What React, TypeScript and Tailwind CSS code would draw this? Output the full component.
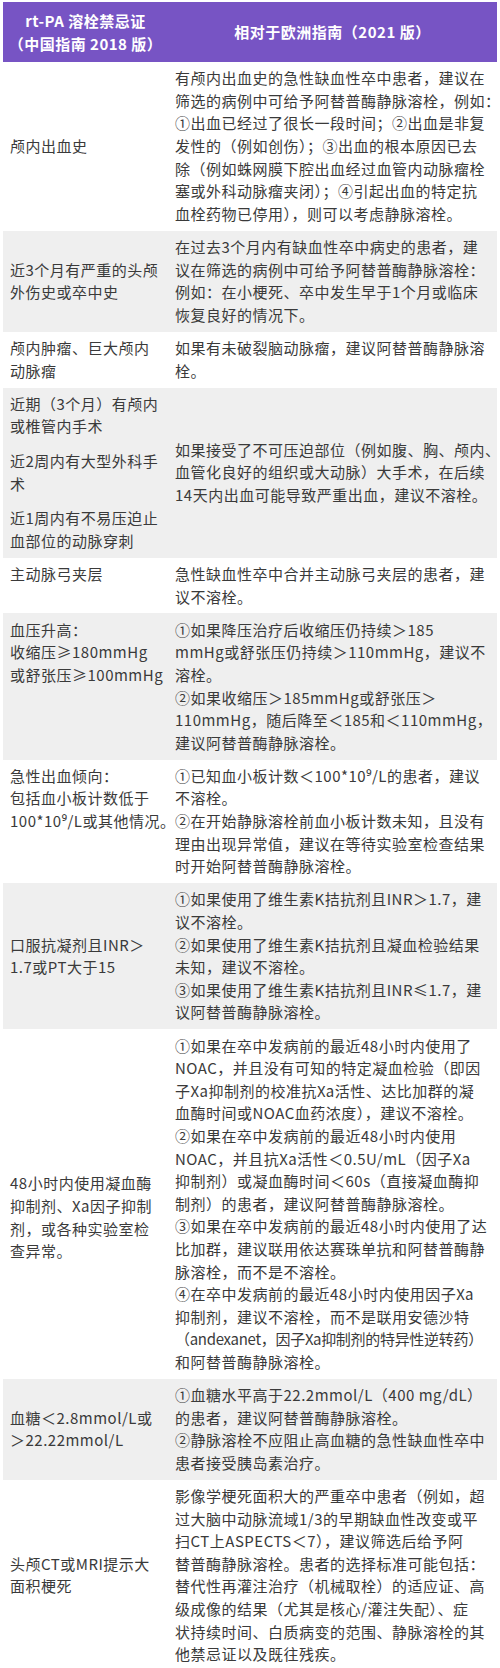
type Row = {
  gray: boolean;
  left: string[][];
  right: string[];
  align?: string;
};

const rows: Row[] = [
  {
    gray: false,
    left: [["颅内出血史"]],
    right: [
      "有颅内出血史的急性缺血性卒中患者，建议在",
      "筛选的病例中可给予阿替普酶静脉溶栓，例如：",
      "①出血已经过了很长一段时间；②出血是非复",
      "发性的（例如创伤）；③出血的根本原因已去",
      "除（例如蛛网膜下腔出血经过血管内动脉瘤栓",
      "塞或外科动脉瘤夹闭）；④引起出血的特定抗",
      "血栓药物已停用），则可以考虑静脉溶栓。",
    ],
  },
  {
    gray: true,
    left: [["近3个月有严重的头颅", "外伤史或卒中史"]],
    right: [
      "在过去3个月内有缺血性卒中病史的患者，建",
      "议在筛选的病例中可给予阿替普酶静脉溶栓：",
      "例如：在小梗死、卒中发生早于1个月或临床",
      "恢复良好的情况下。",
    ],
  },
  {
    gray: false,
    left: [["颅内肿瘤、巨大颅内", "动脉瘤"]],
    right: ["如果有未破裂脑动脉瘤，建议阿替普酶静脉溶", "栓。"],
  },
  {
    gray: true,
    left: [
      ["近期（3个月）有颅内", "或椎管内手术"],
      ["近2周内有大型外科手", "术"],
      ["近1周内有不易压迫止", "血部位的动脉穿刺"],
    ],
    right: [
      "如果接受了不可压迫部位（例如腹、胸、颅内、",
      "血管化良好的组织或大动脉）大手术，在后续",
      "14天内出血可能导致严重出血，建议不溶栓。",
    ],
  },
  {
    gray: false,
    left: [["主动脉弓夹层"]],
    right: ["急性缺血性卒中合并主动脉弓夹层的患者，建", "议不溶栓。"],
    align: "self-start",
  },
  {
    gray: true,
    left: [["血压升高：", "收缩压≥180mmHg", "或舒张压≥100mmHg"]],
    right: [
      "①如果降压治疗后收缩压仍持续＞185",
      "mmHg或舒张压仍持续＞110mmHg，建议不",
      "溶栓。",
      "②如果收缩压＞185mmHg或舒张压＞",
      "110mmHg，随后降至＜185和＜110mmHg，",
      "建议阿替普酶静脉溶栓。",
    ],
    align: "self-start",
  },
  {
    gray: false,
    left: [["急性出血倾向：", "包括血小板计数低于", "100*10⁹/L或其他情况。"]],
    right: [
      "①已知血小板计数＜100*10⁹/L的患者，建议",
      "不溶栓。",
      "②在开始静脉溶栓前血小板计数未知，且没有",
      "理由出现异常值，建议在等待实验室检查结果",
      "时开始阿替普酶静脉溶栓。",
    ],
    align: "self-start",
  },
  {
    gray: true,
    left: [["口服抗凝剂且INR＞", "1.7或PT大于15"]],
    right: [
      "①如果使用了维生素K拮抗剂且INR＞1.7，建",
      "议不溶栓。",
      "②如果使用了维生素K拮抗剂且凝血检验结果",
      "未知，建议不溶栓。",
      "③如果使用了维生素K拮抗剂且INR≤1.7，建",
      "议阿替普酶静脉溶栓。",
    ],
  },
  {
    gray: false,
    left: [["48小时内使用凝血酶", "抑制剂、Xa因子抑制", "剂，或各种实验室检", "查异常。"]],
    right: [
      "①如果在卒中发病前的最近48小时内使用了",
      "NOAC，并且没有可知的特定凝血检验（即因",
      "子Xa抑制剂的校准抗Xa活性、达比加群的凝",
      "血酶时间或NOAC血药浓度），建议不溶栓。",
      "②如果在卒中发病前的最近48小时内使用",
      "NOAC，并且抗Xa活性＜0.5U/mL（因子Xa",
      "抑制剂）或凝血酶时间＜60s（直接凝血酶抑",
      "制剂）的患者，建议阿替普酶静脉溶栓。",
      "③如果在卒中发病前的最近48小时内使用了达",
      "比加群，建议联用依达赛珠单抗和阿替普酶静",
      "脉溶栓，而不是不溶栓。",
      "④在卒中发病前的最近48小时内使用因子Xa",
      "抑制剂，建议不溶栓，而不是联用安德沙特",
      "~（andexanet，因子Xa抑制剂的特异性逆转药）",
      "和阿替普酶静脉溶栓。",
    ],
    align: "self-start pt-[143px]",
  },
  {
    gray: true,
    left: [["血糖＜2.8mmol/L或", "＞22.22mmol/L"]],
    right: [
      "①血糖水平高于22.2mmol/L（400 mg/dL）",
      "的患者，建议阿替普酶静脉溶栓。",
      "②静脉溶栓不应阻止高血糖的急性缺血性卒中",
      "患者接受胰岛素治疗。",
    ],
  },
  {
    gray: false,
    left: [["头颅CT或MRI提示大", "面积梗死"]],
    right: [
      "影像学梗死面积大的严重卒中患者（例如，超",
      "过大脑中动脉流域1/3的早期缺血性改变或平",
      "扫CT上ASPECTS＜7），建议筛选后给予阿",
      "替普酶静脉溶栓。患者的选择标准可能包括：",
      "替代性再灌注治疗（机械取栓）的适应证、高",
      "级成像的结果（尤其是核心/灌注失配）、症",
      "状持续时间、白质病变的范围、静脉溶栓的其",
      "他禁忌证以及既往残疾。",
    ],
  },
];

function Line({ text }: { text: string }) {
  // lines marked with ~ are squeezed so they stay inside the cell
  const tight = text.startsWith("~");
  return (
    <div className={tight ? "whitespace-nowrap tracking-[-0.3px]" : "whitespace-nowrap"}>
      {tight ? text.slice(1) : text}
    </div>
  );
}

export default function App() {
  return (
    <div className="min-h-[1668px] bg-white pt-[2px] font-['Noto_Sans_CJK_SC','Noto_Sans',sans-serif] text-[15px] leading-[22.6px] tracking-[0.5px] text-[#3a3a3a]">
      <div className="mx-[3px]">
        <div className="flex h-[60px] items-center bg-[#7754c4] font-bold text-white">
          <div className="w-[165px] shrink-0 text-center leading-[23px]">
            <div>rt-PA 溶栓禁忌证</div>
            <div>（中国指南 2018 版）</div>
          </div>
          <div className="flex-1 text-center">相对于欧洲指南（2021 版）</div>
        </div>
        {rows.map((r, i) => (
          <div key={i} className={r.gray ? "flex bg-[#efefef]" : "flex bg-white"}>
            <div className={`flex w-[165px] shrink-0 flex-col gap-[12px] px-[7px] py-[5.3px] ${r.align ?? "self-center"}`}>
              {r.left.map((p, j) => (
                <div key={j}>
                  {p.map((l, k) => (
                    <Line key={k} text={l} />
                  ))}
                </div>
              ))}
            </div>
            <div className="flex flex-1 flex-col justify-center py-[5.3px] pl-[7px]">
              {r.right.map((l, k) => (
                <Line key={k} text={l} />
              ))}
            </div>
          </div>
        ))}
      </div>
    </div>
  );
}
